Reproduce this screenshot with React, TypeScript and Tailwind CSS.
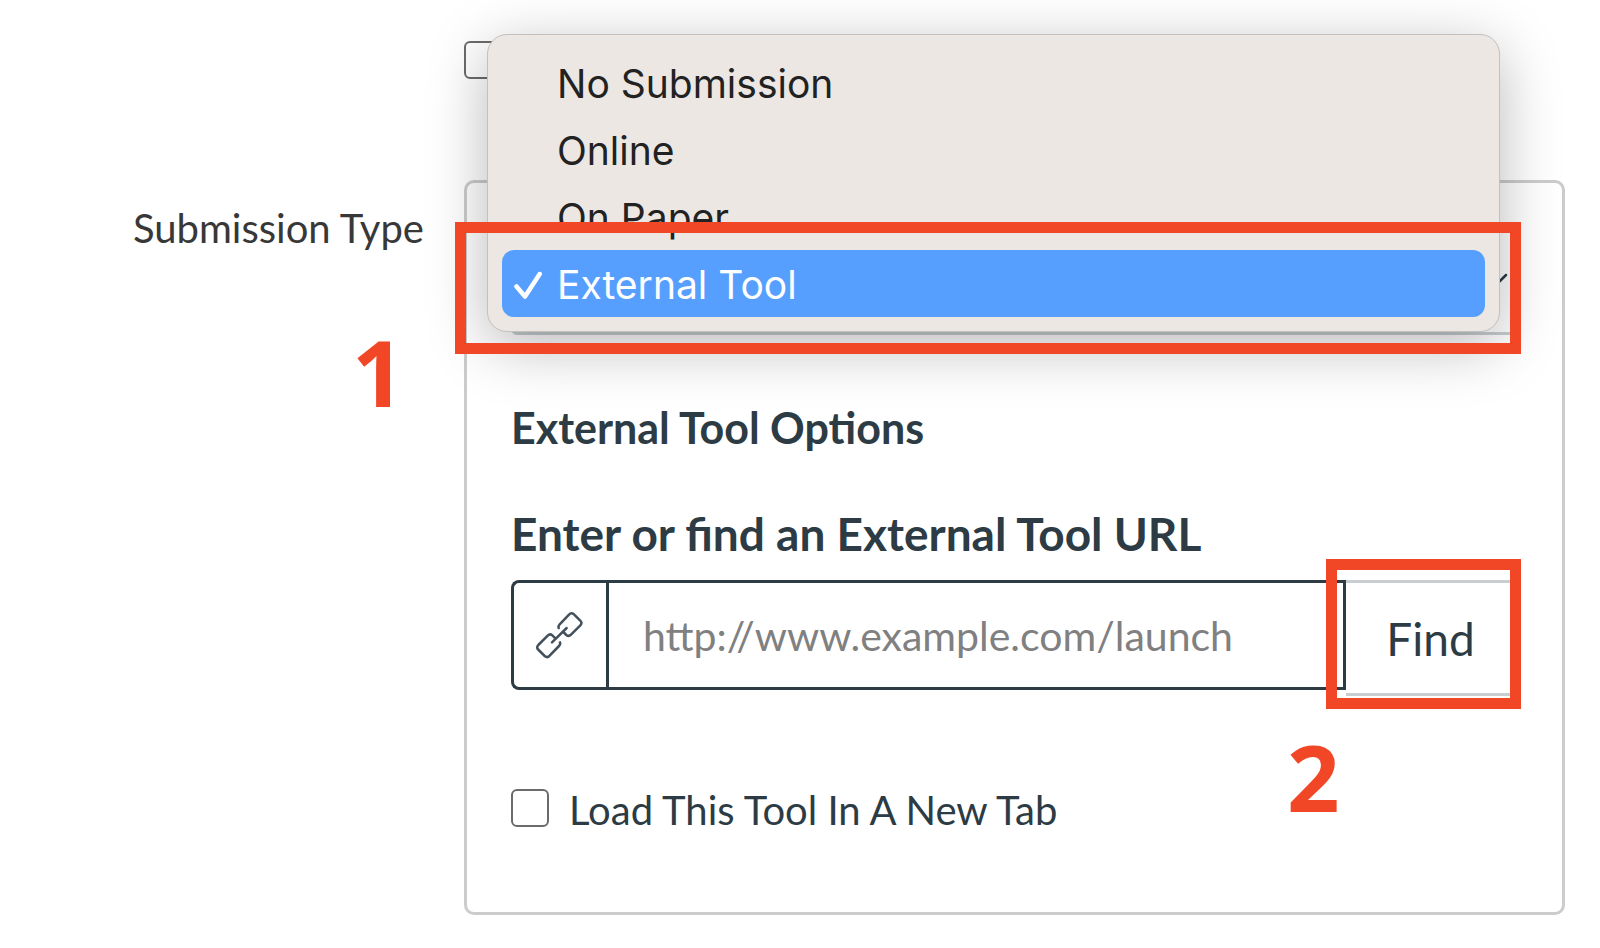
import { useState } from 'react';

const submissionTypes = ['No Submission', 'Online', 'On Paper', 'External Tool'];

function LinkIcon() {
  return (
    <svg
      width="48"
      height="48"
      viewBox="50 33 144 144"
      fill="none"
      stroke="#43515d"
      strokeWidth="7.500"
      strokeLinecap="round"
      strokeLinejoin="round"
      aria-hidden="true"
    >
      <path d="M118 84q-2-6 3-11l28-29q7-8 15-1l18 18q8 7 1 15l-28 28q-7 7-14 1l-9-9" />
      <path d="M122 127q2 6-3 11l-28 29q-7 8-15 1l-18-18q-8-7-1-15l28-28q7-7 14-1l9 9" />
      <path d="M98 127l44-43" />
    </svg>
  );
}

export default function App() {
  const [selected, setSelected] = useState('External Tool');
  const [url, setUrl] = useState('');

  return (
    <main className="min-h-screen overflow-hidden bg-white font-[Lato,sans-serif] text-[#2d3b45]">
      <div className="grid grid-cols-[29vw_1fr] pt-[41px] pr-[35px]">
        <div />
        <div className="h-[139px]">
          <input
            type="checkbox"
            aria-label="Do not count this assignment"
            className="block size-[38px] appearance-none rounded-md border-2 border-[#6b6b6b] bg-white"
          />
        </div>

        <label htmlFor="submission-type" className="pt-6 pr-10 text-right text-[40px] leading-12 text-[#383838]">
          Submission Type
        </label>

        <div className="rounded-[10px] border-3 border-[#cccccc] px-11 pt-[42px] pb-[78px]">
          {/* Select with its open menu */}
          <div className="relative">
            <select
              id="submission-type"
              value={selected}
              onChange={(e) => setSelected(e.target.value)}
              className="block h-[110px] w-full appearance-none rounded-md border-3 border-[#c7cdd1] bg-white px-9 text-[40px]"
            >
              {submissionTypes.map((t) => (
                <option key={t}>{t}</option>
              ))}
            </select>
            <svg
              className="pointer-events-none absolute top-[48px] right-[10px]"
              width="26"
              height="16"
              viewBox="0 0 26 16"
              fill="none"
              stroke="#2d3b45"
              strokeWidth="2.500"
              strokeLinecap="round"
              aria-hidden="true"
            >
              <path d="M2 2l11 11L24 2" />
            </svg>

            <ul
              role="listbox"
              aria-label="Submission Type"
              className="absolute right-[18px] bottom-[3px] -left-6 rounded-[20px] border border-[#c3c0be] bg-[#ece7e3] p-[14px] font-[Inter,sans-serif] text-[39px] leading-[65px] text-[#222222] shadow-[0_14px_60px_rgba(0,0,0,0.28)]"
            >
              {submissionTypes.map((t) => (
                <li
                  key={t}
                  role="option"
                  aria-selected={t === selected}
                  onClick={() => setSelected(t)}
                  className={
                    t === selected
                      ? 'flex rounded-xl bg-[#579fff] pt-0.5 text-white'
                      : 'flex rounded-xl pt-0.5'
                  }
                >
                  <span className="flex w-[55px] items-center pl-3">
                    {t === selected && (
                      <svg
                        width="29"
                        height="34"
                        viewBox="0 0 29 34"
                        fill="none"
                        stroke="white"
                        strokeWidth="4.500"
                        strokeLinecap="round"
                        strokeLinejoin="round"
                        aria-hidden="true"
                      >
                        <path d="M2.500 18.500l8.500 10L25.700 6" />
                      </svg>
                    )}
                  </span>
                  {t}
                </li>
              ))}
            </ul>

            {/* Step 1 */}
            <div className="pointer-events-none absolute -top-[3px] -right-[3px] -bottom-[19px] -left-14 border-11 border-[#f24726]" />
            <span className="absolute top-[85px] -left-[159px] font-['Open_Sans',sans-serif] text-[92px] leading-[124px] font-bold text-[#f24726]">
              1
            </span>
          </div>

          <h2 className="mt-[67px] text-[43px] leading-[52px] font-bold">External Tool Options</h2>

          <label htmlFor="tool-url" className="mt-[52px] block text-[46px] leading-14 font-bold">
            Enter or find an External Tool URL
          </label>

          <div className="relative mt-[18px] flex items-start">
            <span className="flex h-[110px] w-[95px] shrink-0 items-center justify-center rounded-l-lg border-3 border-r-0 border-[#2d3b45]">
              <LinkIcon />
            </span>
            <input
              id="tool-url"
              type="text"
              value={url}
              onChange={(e) => setUrl(e.target.value)}
              placeholder="http://www.example.com/launch"
              className="h-[110px] min-w-0 flex-1 border-3 border-[#2d3b45] px-[34px] text-[41px] outline-none placeholder:text-[#808080]"
            />
            <div className="relative">
              <button
                type="button"
                className="block h-[116px] w-[172px] rounded-r-md border-3 border-l-0 border-[#c7cdd1] bg-white text-[46px]"
              >
                Find
              </button>
              {/* Step 2 */}
              <div className="pointer-events-none absolute -top-[21px] -right-[3px] -bottom-[13px] -left-5 border-11 border-[#f24726]" />
              <span className="absolute top-[135px] -left-[59px] font-['Open_Sans',sans-serif] text-[92px] leading-[124px] font-bold text-[#f24726]">
                2
              </span>
            </div>
          </div>

          <div className="mt-[90px] flex items-start gap-5">
            <input
              id="new-tab"
              type="checkbox"
              className="mt-[3px] size-[38px] shrink-0 appearance-none rounded-md border-2 border-[#6b6b6b] bg-white"
            />
            <label htmlFor="new-tab" className="text-[40px] leading-12">
              Load This Tool In A New Tab
            </label>
          </div>
        </div>
      </div>
    </main>
  );
}
